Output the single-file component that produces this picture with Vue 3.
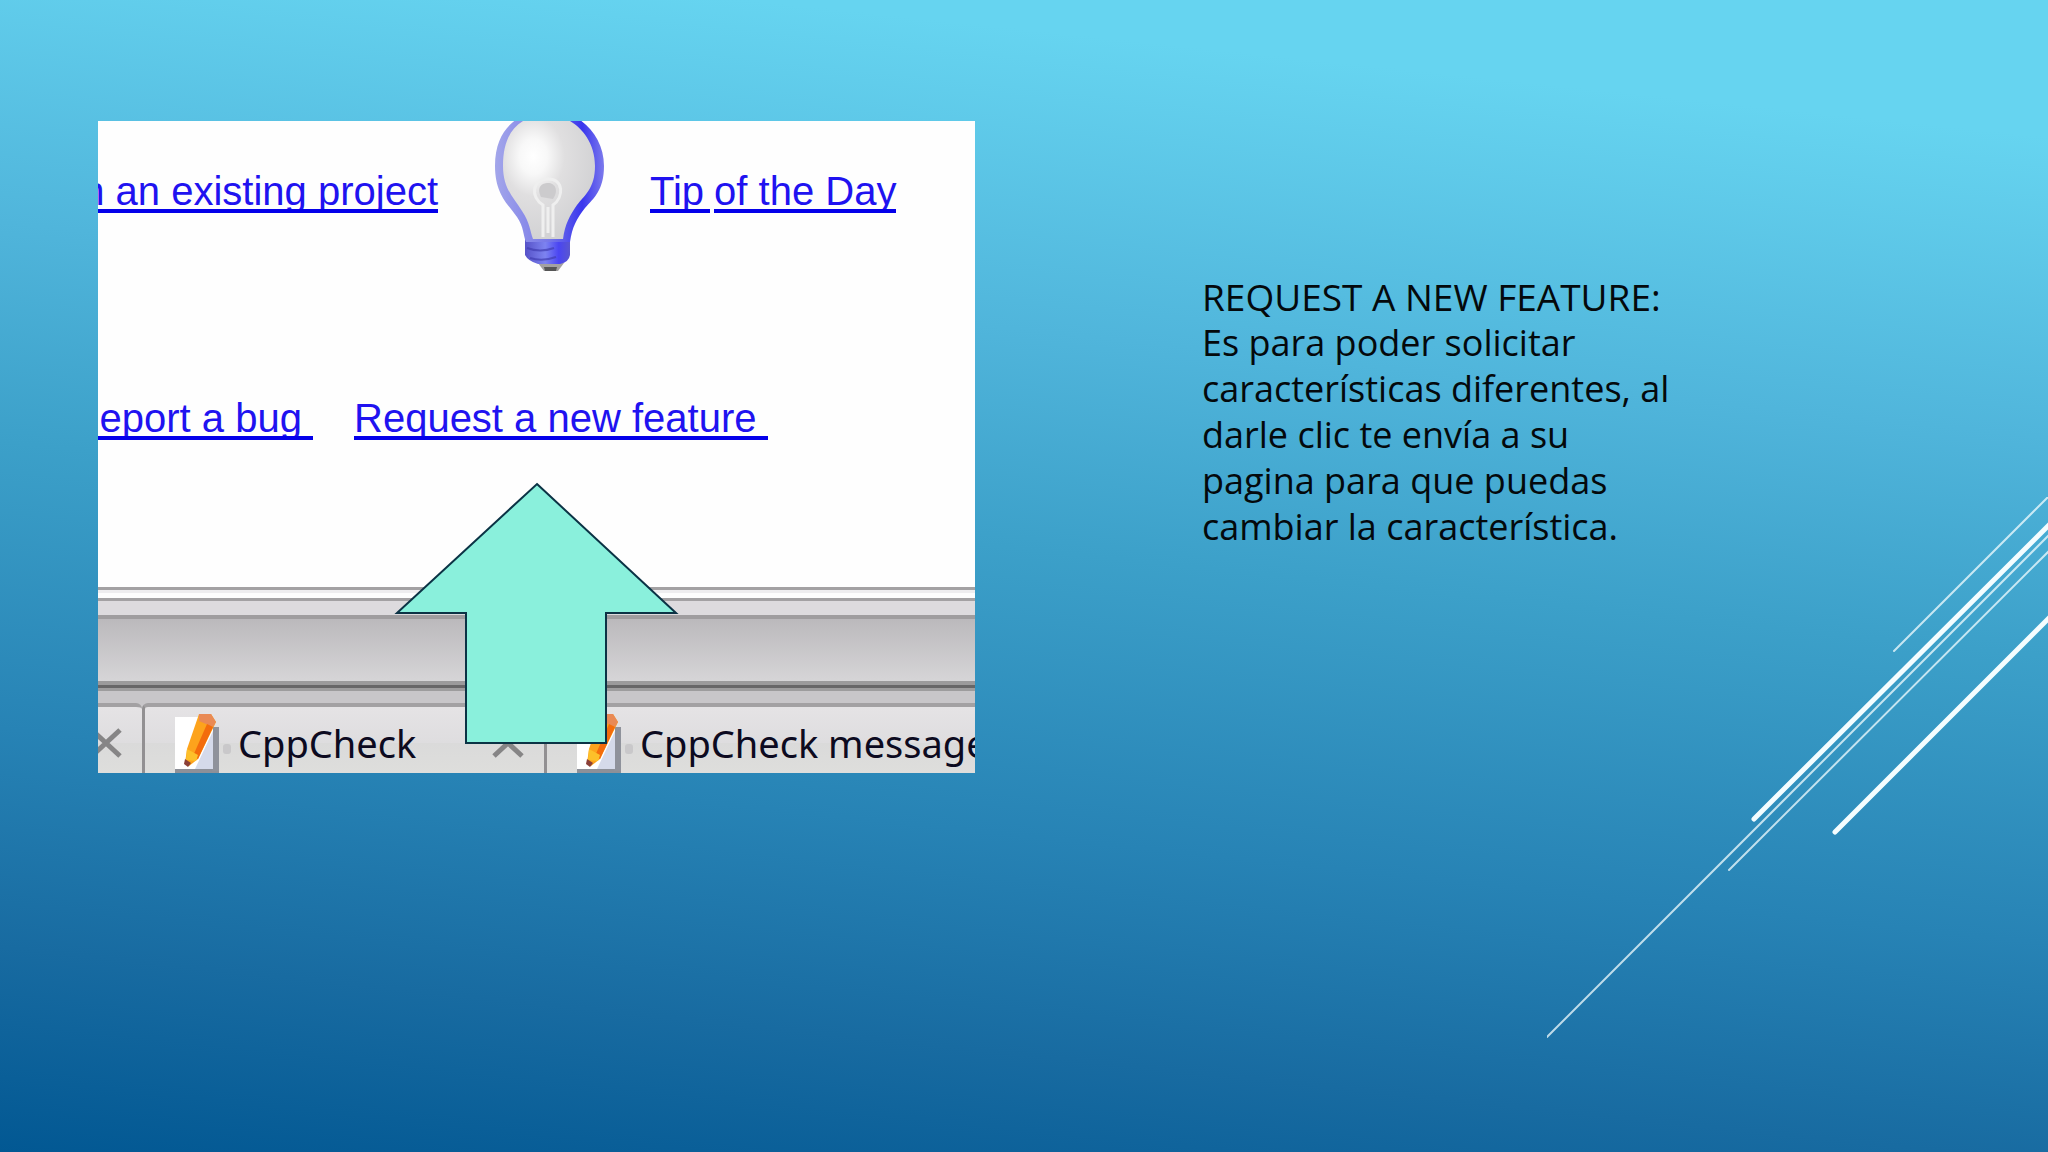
<script setup>
const lines = [
  { x1: 347, y1: 154, x2: 503, y2: -2, w: 2, o: 0.75 },
  { x1: 207, y1: 322, x2: 503, y2: 27, w: 5, o: 1 },
  { x1: 0, y1: 540, x2: 503, y2: 37, w: 2, o: 0.75 },
  { x1: 182, y1: 373, x2: 503, y2: 53, w: 2, o: 0.75 },
  { x1: 288, y1: 335, x2: 503, y2: 120, w: 5, o: 1 },
]
const tabs = ['CppCheck', 'CppCheck message']
</script>

<template>
  <main class="slide">
    <figure class="capture">
      <div class="row">
        <div class="clip">
          <a class="link" href="#project">n an existing project</a>
        </div>
        <svg class="bulb" viewBox="0 0 110 150" aria-hidden="true">
          <defs>
            <radialGradient id="glass" cx="0.33" cy="0.3" r="0.75">
              <stop offset="0" stop-color="#fff" />
              <stop offset="0.2" stop-color="#f8f8f8" />
              <stop offset="0.45" stop-color="#e0dfe0" />
              <stop offset="1" stop-color="#d0d0d2" />
            </radialGradient>
            <linearGradient id="rim" x1="0" x2="1">
              <stop offset="0" stop-color="#a3a6ea" />
              <stop offset="0.5" stop-color="#7677e8" />
              <stop offset="0.8" stop-color="#3a36ee" />
              <stop offset="1" stop-color="#7c7aec" />
            </linearGradient>
            <linearGradient id="cap" x1="0" x2="1">
              <stop offset="0" stop-color="#5652c8" />
              <stop offset="0.45" stop-color="#7d83f0" />
              <stop offset="0.75" stop-color="#4a45f2" />
              <stop offset="1" stop-color="#5a57cf" />
            </linearGradient>
          </defs>
          <path d="M44 142 H70 L64 150 H50 Z" fill="#a3a1a1" />
          <path d="M50 146 H63 L62 150 H51 Z" fill="#555" />
          <path d="M31 114 H76 V134 Q75 141 66 143 H44 Q34 140 31 134 Z" fill="url(#cap)" />
          <path d="M33 127 Q46 132 60 127 M36 137 Q48 141 62 136" fill="none" stroke="#403db0" stroke-width="2" opacity="0.7" />
          <path d="M23 -2 C11 6 1 20 1 45 C1 74 15 84 23 96 C30 106 29 114 32 121 H76 C78 106 83 97 91 87 C100 77 110 69 110 45 C110 22 97 5 80 -5 Z" fill="url(#rim)" />
          <path d="M29 0 C16 8 9 22 9 45 C9 68 20 77 28 90 C36 102 36 110 39 118 H69 C71 103 76 94 83 84 C91 74 101 67 101 45 C101 22 88 7 76 0 Z" fill="url(#glass)" />
          <path d="M49 116 V84 C36 76 38 58 54 58 C70 58 70 76 59 84 V116 M54 86 V112" fill="none" stroke="#efefef" stroke-width="3" />
          <path d="M47 76 C42 66 48 62 54 62 C61 62 65 69 59 78 Z" fill="#cccbcd" />
        </svg>
        <a class="tip" href="#tip"><span class="link lead">Tip</span><span class="link">of the Day</span></a>
      </div>

      <div class="row second">
        <div class="clip short">
          <a class="link" href="#bug">Report a bug </a>
        </div>
        <a class="link" href="#feature">Request a new feature </a>
      </div>

      <div class="chrome">
        <div class="edge"></div>
        <div class="band"></div>
        <div class="rule"></div>
        <div class="tabs">
          <div class="tab first">
            <button class="close" type="button" aria-label="Close">
              <svg viewBox="0 0 32 30"><path d="M2 2 L30 28 M30 2 L2 28" /></svg>
            </button>
          </div>
          <div v-for="name in tabs" :key="name" class="tab">
            <svg class="doc" viewBox="0 0 58 60" aria-hidden="true">
              <rect x="2" y="56" width="44" height="4" fill="#8d9098" />
              <rect x="39" y="14" width="7" height="44" fill="#8f929b" />
              <rect x="2" y="4" width="38" height="52" fill="#fff" />
              <path d="M40 18 V56 H22 Z" fill="#d5daea" />
              <rect x="50" y="31" width="8" height="10" rx="3" fill="#c9c8ca" />
              <path d="M26 1 H38 L43 9 L25 46 L16 53 L12 50 L14 36 Z" fill="#fda31c" />
              <path d="M26 1 H38 L43 9 L40 14 L26 8 Z" fill="#e98a55" />
              <path d="M34 11 L40 14 L25 46 L20 43 Z" fill="#f36c0c" />
              <path d="M14 36 L25 42 L23 48 L13 47 Z" fill="#fdc02a" />
              <path d="M12 46 L18 50 L15 54 L11 51 Z" fill="#8b4038" />
            </svg>
            <span class="name">{{ name }}</span>
            <button class="close" type="button" :aria-label="'Close ' + name">
              <svg viewBox="0 0 32 30"><path d="M2 2 L30 28 M30 2 L2 28" /></svg>
            </button>
          </div>
        </div>
      </div>

      <svg class="arrow" viewBox="0 0 288 264" aria-hidden="true">
        <path d="M144 2 L283 131 H213 V261 H73 V131 H4 Z" />
      </svg>
    </figure>

    <section class="note">
      <h1>REQUEST A NEW FEATURE:</h1>
      <p>Es para poder solicitar<br />características diferentes, al<br />darle clic te envía a su<br />pagina para que puedas<br />cambiar la característica.</p>
    </section>

    <svg class="streaks" viewBox="0 0 501 541" aria-hidden="true">
      <line v-for="(l, i) in lines" :key="i" :x1="l.x1" :y1="l.y1" :x2="l.x2" :y2="l.y2" :stroke-width="l.w" :stroke-opacity="l.o" />
    </svg>
  </main>
</template>

<style>
body {
  margin: 0;
}
</style>

<style scoped>
.slide {
  position: relative;
  box-sizing: border-box;
  min-height: 100vh;
  padding: 121px 98px;
  display: grid;
  grid-template-columns: minmax(0, 877fr) minmax(0, 975fr);
  align-items: start;
  overflow: hidden;
  background: linear-gradient(186deg, #66d4f0 10%, #50b5db 32%, #3ca0c9 48%, #2783b5 69%, #186ba1 85%, #025893 100%);
}

.capture {
  position: relative;
  margin: 0;
  overflow: hidden;
  background: #fefefe;
}

.row {
  display: flex;
  align-items: flex-start;
}

.second {
  margin-top: 127px;
  gap: 41px;
}

.clip {
  flex: none;
  display: flex;
  justify-content: flex-end;
  width: 340px;
  margin-top: 50px;
}

.short {
  width: 215px;
  margin-top: 0;
}

.link {
  position: relative;
  display: block;
  flex: none;
  height: 42px;
  color: #2012f0;
  font: 40px/40px "Liberation Sans", Arial, sans-serif;
  white-space: pre;
  text-decoration: none;
}

/* The underline covers the descenders below the baseline. */
.link::after {
  content: "";
  position: absolute;
  top: 38px;
  left: 0;
  right: 0;
  height: 4px;
  border-bottom: 6px solid #fefefe;
  background: #0400ea;
}

.bulb {
  flex: none;
  width: 110px;
  height: 150px;
  margin: 0 46px 0 56px;
}

.tip {
  display: flex;
  gap: 4px;
  margin-top: 50px;
  text-decoration: none;
}

.lead {
  padding-right: 6px;
}

.chrome {
  margin-top: 147px;
}

.edge {
  height: 28px;
  background: linear-gradient(#a3a1a3 3px, #eeedef 3px 6px, #fdfdfd 6px 11px, #a3a1a3 11px 14px, #dddbde 14px);
}

.band {
  height: 66px;
  background: linear-gradient(#9f9d9f 4px, #bbb9bc 4px, #d6d5d7);
}

.rule {
  height: 22px;
  background: linear-gradient(#9b9a9b 4px, #676667 4px 7px, #9d9c9d 7px 10px, #c8c6c9 10px);
}

.tabs {
  display: flex;
  height: 70px;
  overflow: hidden;
  background: #c8c6c9;
}

.tab {
  box-sizing: border-box;
  flex: none;
  display: flex;
  align-items: flex-start;
  width: 402px;
  padding: 6px 20px 0 28px;
  border-top: 4px solid #a3a1a3;
  border-left: 3px solid #929092;
  border-top-left-radius: 6px;
  background: linear-gradient(#e5e3e5, #dedddf 36px, #dadada 36px, #dededc);
}

.tab:last-child {
  flex-grow: 1;
}

.first {
  justify-content: flex-end;
  width: 44px;
  padding: 6px 20px 0 0;
  border-left: 0;
  border-radius: 0 6px 0 0;
}

.doc {
  flex: none;
  width: 58px;
  height: 60px;
}

.name {
  flex: none;
  margin-left: 7px;
  color: #0c0a20;
  font: 38px/60px "Noto Sans", "Open Sans", sans-serif;
}

.close {
  flex: none;
  width: 32px;
  height: 30px;
  margin: 15px 0 0 auto;
  padding: 0;
  border: 0;
  background: none;
}

.close svg {
  display: block;
  width: 32px;
  height: 30px;
}

.close path {
  fill: none;
  stroke: #868586;
  stroke-width: 5;
}

.arrow {
  position: absolute;
  left: 295px;
  top: 361px;
  width: 288px;
  height: 264px;
}

.arrow path {
  fill: #8af0dc;
  stroke: #0b3345;
  stroke-width: 2;
}

.note {
  padding: 153px 0 0 227px;
  color: #04090c;
  font: 36px/46px "Open Sans", "Noto Sans", sans-serif;
  white-space: nowrap;
}

.note h1 {
  margin: 0;
  font-size: 37px;
  font-weight: 400;
}

.note p {
  margin: 0;
}

.streaks {
  position: absolute;
  right: 0;
  top: 497px;
  width: 501px;
  height: 541px;
}

.streaks line {
  stroke: #f4fdff;
  stroke-linecap: round;
}
</style>
